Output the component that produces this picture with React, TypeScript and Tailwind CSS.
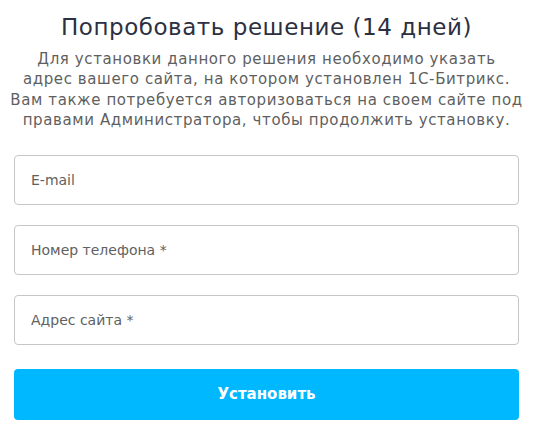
export default function App() {
  const fields = ["E-mail", "Номер телефона *", "Адрес сайта *"];

  return (
    <div className="w-[539px] h-[438px] bg-white pl-[14px] pr-[20px] pt-[12px] font-['DejaVu_Sans',sans-serif]">
      <h2 className="text-center text-[23px] leading-[30px] tracking-[0.55px] text-[#2c3040]">
        Попробовать решение (14 дней)
      </h2>
      <p className="-mx-[6px] mt-[7px] whitespace-nowrap text-center text-[15px] leading-[20.4px] tracking-[0.6px] text-[#5f5f5f]">
        Для установки данного решения необходимо указать
        <br />
        адрес вашего сайта, на котором установлен 1С-Битрикс.
        <br />
        Вам также потребуется авторизоваться на своем сайте под
        <br />
        правами Администратора, чтобы продолжить установку.
      </p>
      <form className="mt-[24px] flex flex-col gap-[20px]" onSubmit={(e) => e.preventDefault()}>
        {fields.map((f) => (
          <input
            key={f}
            placeholder={f}
            className="h-[50px] w-full rounded-[4px] border border-[#c6c6c6] px-[16px] text-[14px] text-[#555] placeholder:text-[#616161] outline-none"
          />
        ))}
        <button
          type="submit"
          className="mt-[4px] h-[51px] w-full rounded-[4px] bg-[#00b8ff] text-[15px] font-bold text-white"
        >
          Установить
        </button>
      </form>
    </div>
  );
}
